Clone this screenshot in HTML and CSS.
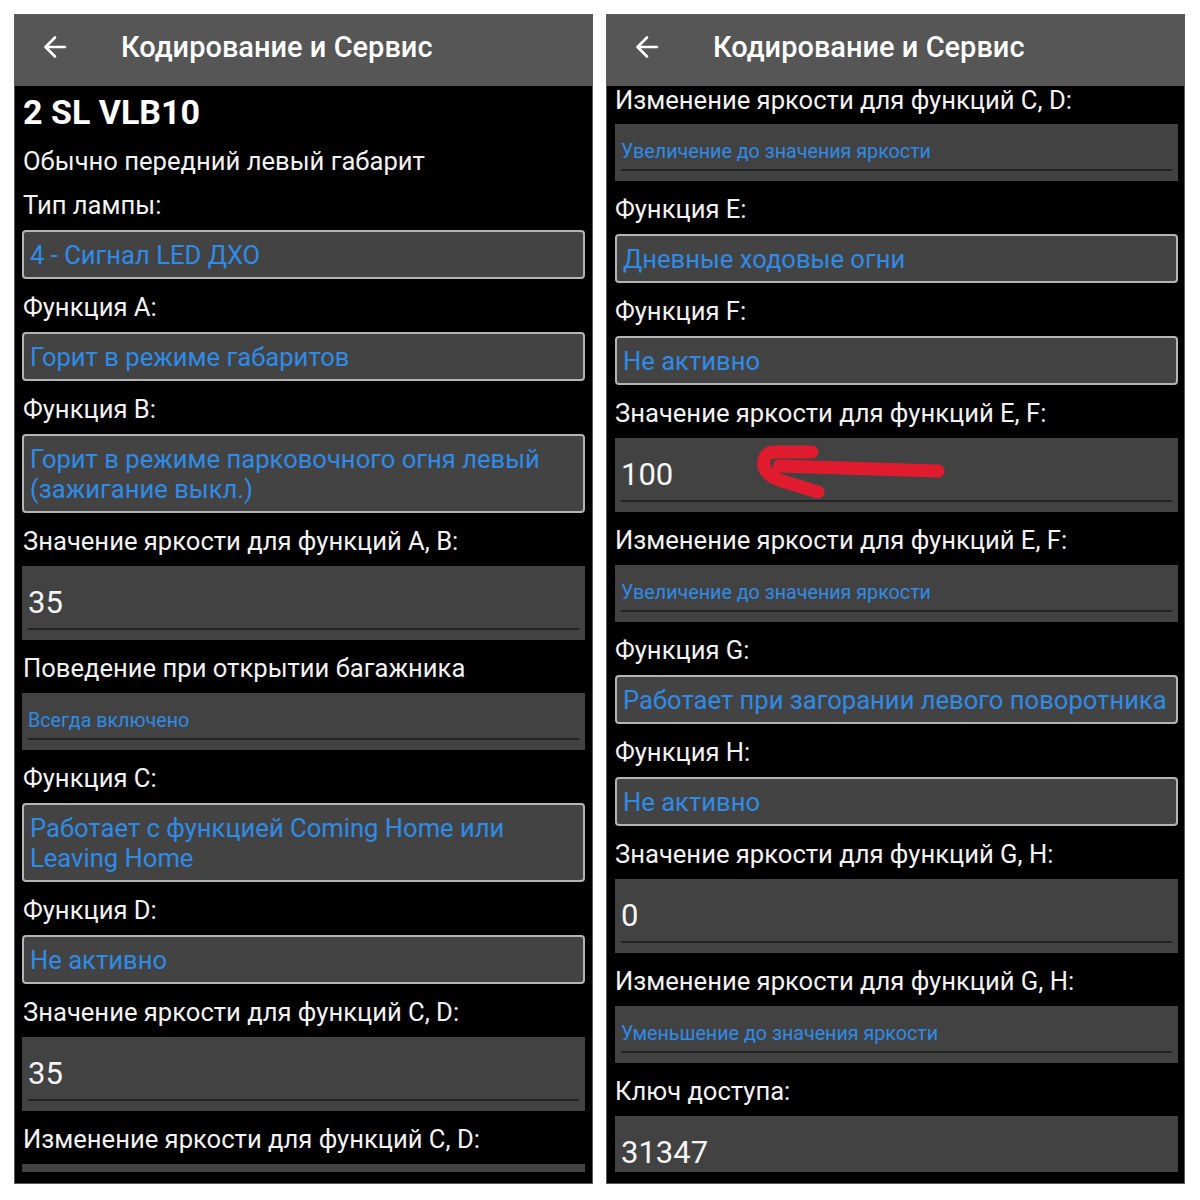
FILE: index.html
```html
<!DOCTYPE html>
<html lang="ru">
<head>
    <meta charset="UTF-8">
    <meta name="viewport" content="width=device-width, initial-scale=1.0">
    <title>Кодирование и Сервис</title>
    <link rel="stylesheet" href="styles.css">
</head>
<body>
    <div class="screens">
        <!-- Левый экран -->
        <div class="phone">
            <div class="app-bar">
                <svg class="back" viewBox="0 0 24 24" width="24" height="24"><path d="M22 12H3M12 2.5L2.5 12L12 21.5" fill="none" stroke="#fff" stroke-width="2.6" stroke-linecap="round" stroke-linejoin="round"/></svg>
                <span class="app-title">Кодирование и Сервис</span>
            </div>
            <div class="scroll">
                <div class="list">
                    <div class="lamp-name">2 SL VLB10</div>
                    <div class="lamp-desc">Обычно передний левый габарит</div>
                    <div class="label first">Тип лампы:</div>
                    <div class="select">4 - Сигнал LED ДХО</div>
                    <div class="label">Функция А:</div>
                    <div class="select">Горит в режиме габаритов</div>
                    <div class="label">Функция В:</div>
                    <div class="select">Горит в режиме парковочного огня левый (зажигание выкл.)</div>
                    <div class="label">Значение яркости для функций А, В:</div>
                    <div class="input"><div class="value">35</div><div class="line"></div></div>
                    <div class="label">Поведение при открытии багажника</div>
                    <div class="spinner"><div class="value">Всегда включено</div><div class="line"></div></div>
                    <div class="label">Функция С:</div>
                    <div class="select">Работает с функцией Coming Home или Leaving Home</div>
                    <div class="label">Функция D:</div>
                    <div class="select">Не активно</div>
                    <div class="label">Значение яркости для функций C, D:</div>
                    <div class="input"><div class="value">35</div><div class="line"></div></div>
                    <div class="label">Изменение яркости для функций C, D:</div>
                    <!-- поле уходит за нижний край экрана -->
                    <div class="spinner"></div>
                </div>
            </div>
        </div>

        <!-- Правый экран (прокручен ниже) -->
        <div class="phone">
            <div class="app-bar">
                <svg class="back" viewBox="0 0 24 24" width="24" height="24"><path d="M22 12H3M12 2.5L2.5 12L12 21.5" fill="none" stroke="#fff" stroke-width="2.6" stroke-linecap="round" stroke-linejoin="round"/></svg>
                <span class="app-title">Кодирование и Сервис</span>
            </div>
            <div class="scroll">
                <div class="list scrolled">
                    <div class="label top">Изменение яркости для функций C, D:</div>
                    <div class="spinner"><div class="value">Увеличение до значения яркости</div><div class="line"></div></div>
                    <div class="label">Функция E:</div>
                    <div class="select">Дневные ходовые огни</div>
                    <div class="label">Функция F:</div>
                    <div class="select">Не активно</div>
                    <div class="label">Значение яркости для функций E, F:</div>
                    <div class="input marked">
                        <div class="value">100</div><div class="line"></div>
                        <svg class="red-arrow" viewBox="0 0 200 56" width="200" height="56"><path d="M60 9L21 9Q10 11 12 24Q16 34 30 38L66 49M27 23L186 28" fill="none" stroke="#e11b2e" stroke-width="13" stroke-linecap="round" stroke-linejoin="round"/></svg>
                    </div>
                    <div class="label">Изменение яркости для функций E, F:</div>
                    <div class="spinner"><div class="value">Увеличение до значения яркости</div><div class="line"></div></div>
                    <div class="label">Функция G:</div>
                    <div class="select">Работает при загорании левого поворотника</div>
                    <div class="label">Функция H:</div>
                    <div class="select">Не активно</div>
                    <div class="label">Значение яркости для функций G, H:</div>
                    <div class="input"><div class="value">0</div><div class="line"></div></div>
                    <div class="label">Изменение яркости для функций G, H:</div>
                    <div class="spinner"><div class="value">Уменьшение до значения яркости</div><div class="line"></div></div>
                    <div class="label">Ключ доступа:</div>
                    <div class="input"><div class="value">31347</div><div class="line"></div></div>
                </div>
            </div>
        </div>
    </div>
</body>
</html>
```

FILE: styles.css
```css
* { box-sizing: border-box; }
body { margin: 0; background-color: #ffffff; font-family: Roboto, "Noto Sans", sans-serif; }

.screens { display: flex; gap: 15px; padding: 15px; }

.phone {
    width: 577px;
    height: 1168px;
    background-color: #000;
    padding-bottom: 11px;
    display: flex;
    flex-direction: column;
    outline: 1px solid #5a5a5a;
}

.app-bar {
    height: 71px;
    flex-shrink: 0;
    background-color: #565656;
    display: flex;
    align-items: center;
    padding: 0 0 8px 28px;
}
.back { flex-shrink: 0; }
.app-title {
    margin-left: 54px;
    color: #fff;
    font-size: 29px;
    font-weight: 500;
}

.scroll { flex: 1; overflow: hidden; }
.list { padding: 0 7px; }
.list.scrolled { padding: 0 6px 0 8px; }

.lamp-name {
    height: 53px;
    line-height: 53px;
    padding-left: 1px;
    color: #fff;
    font-size: 34px;
    font-weight: 700;
}
.lamp-desc {
    height: 44px;
    line-height: 44px;
    padding-left: 1px;
    color: #f2f2f2;
    font-size: 25.6px;
}

.label {
    height: 53px;
    padding: 14px 0 0 1px;
    line-height: 28px;
    color: #f2f2f2;
    font-size: 25.6px;
    white-space: nowrap;
}
.scrolled .label { padding-left: 0; }
.label.first { height: 47px; padding-top: 8px; }
/* список прокручен: подпись прижата к шапке */
.scrolled .label.top { height: 38px; padding-top: 0; }

.select {
    background-color: #434343;
    border: 2px solid #b4b4b4;
    border-radius: 4px;
    padding: 8px 7px 7px 6px;
    line-height: 30px;
    color: #2f8be6;
    font-size: 25.6px;
}

.input {
    height: 74px;
    background-color: #424242;
    padding: 22px 6px 0 6px;
    position: relative;
}
.input .value {
    line-height: 30px;
    color: #f5f5f5;
    font-size: 31px;
}
.input .line { margin-top: 10px; height: 2px; background-color: #232323; }

.spinner {
    height: 57px;
    background-color: #424242;
    padding: 16px 6px 0 6px;
}
.spinner .value {
    line-height: 24px;
    color: #2f8be6;
    font-size: 19.7px;
}
.spinner .line { margin-top: 5px; height: 2px; background-color: #232323; }

/* пометка красной стрелкой поверх поля */
.red-arrow { position: absolute; left: 137px; top: 5px; }
```
